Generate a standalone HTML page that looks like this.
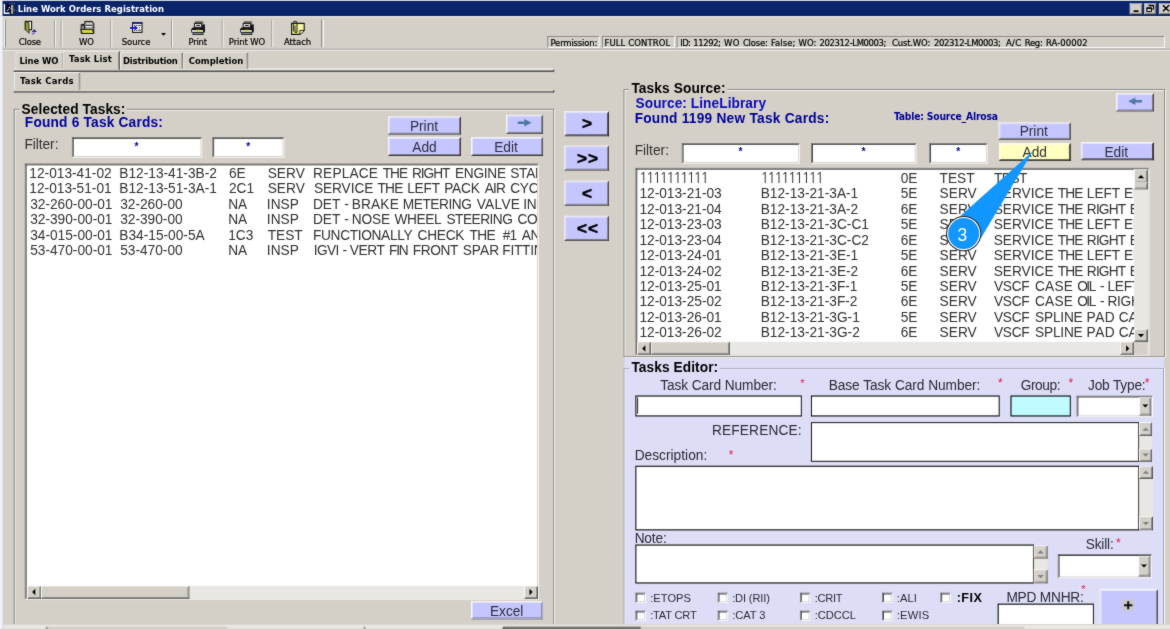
<!DOCTYPE html>
<html lang="en"><head><meta charset="utf-8"><title>Line Work Orders Registration</title>
<style>
html,body{margin:0;padding:0;overflow:hidden}
#page{position:absolute;left:0;top:0;width:1170px;height:629px;overflow:hidden;background:#D4D0C8}
body{width:1170px;height:629px;overflow:hidden;background:#D4D0C8;position:relative;font-family:"Liberation Sans",Arial,sans-serif}
#root{position:absolute;left:4px;top:4px;width:1366px;height:735px;transform:scale(0.856515);transform-origin:0 0}
#wrap{position:absolute;left:-4px;top:-4px;width:1178px;height:637px;overflow:hidden;background:#D4D0C8;filter:url(#soft)}
#root div,#root span{position:absolute;box-sizing:border-box}
#root span{white-space:pre;line-height:1}
#root .clip{overflow:hidden}
#root .th{font-family:"DejaVu Sans Condensed","Liberation Sans",sans-serif}
#root .ng{font-family:"NanumGothic","Liberation Sans",sans-serif}
#ov{position:absolute;left:4px;top:4px;width:1170px;height:629px;overflow:visible}
</style></head><body>
<svg width="0" height="0" style="position:absolute"><defs><filter id="soft" x="0" y="0" width="100%" height="100%" color-interpolation-filters="sRGB"><feConvolveMatrix order="3" kernelMatrix="1 2 1 2 26 2 1 2 1" edgeMode="duplicate" preserveAlpha="true"/></filter></defs></svg>
<div id="page">
<div id="wrap">
<div id="root">
<div style="left:-4.67px;top:-4.67px;width:1377.68px;height:6.07px;background:#EEF1F8;"></div>
<div style="left:-4.67px;top:-4.67px;width:7.24px;height:747.21px;background:#EEF1F8;"></div>
<div style="left:2.57px;top:1.4px;width:1370.44px;height:17.51px;background:#0A246A;"></div>
<span class="th" style="left:20.67px;top:5px;font-size:11px;font-weight:700;color:#fff;letter-spacing:0.05px;">Line Work Orders Registration</span>
<div style="left:2.57px;top:18.91px;width:1370.44px;height:1px;background:#fff"></div>
<div style="left:1319.3px;top:3.62px;width:14.83px;height:12.96px;border:1px solid;border-color:#fff #404040 #404040 #fff;"><div style="left:0;top:0;right:0;bottom:0;border:1px solid;border-color:#D4D0C8 #808080 #808080 #D4D0C8;background:#D4D0C8"></div></div>
<div style="left:1335.64px;top:3.62px;width:14.83px;height:12.96px;border:1px solid;border-color:#fff #404040 #404040 #fff;"><div style="left:0;top:0;right:0;bottom:0;border:1px solid;border-color:#D4D0C8 #808080 #808080 #D4D0C8;background:#D4D0C8"></div></div>
<div style="left:1353.16px;top:3.62px;width:14.83px;height:12.96px;border:1px solid;border-color:#fff #404040 #404040 #fff;"><div style="left:0;top:0;right:0;bottom:0;border:1px solid;border-color:#D4D0C8 #808080 #808080 #D4D0C8;background:#D4D0C8"></div></div>
<div style="left:4.67px;top:22.77px;width:1px;height:32.69px;background:#fff"></div>
<div style="left:5.72px;top:22.77px;width:1px;height:32.69px;background:#808080"></div>
<div style="left:62.58px;top:23.35px;width:1px;height:32.11px;background:#808080"></div>
<div style="left:63.63px;top:23.35px;width:1px;height:32.11px;background:#fff"></div>
<div style="left:70.75px;top:23.35px;width:1px;height:32.11px;background:#808080"></div>
<div style="left:71.8px;top:23.35px;width:1px;height:32.11px;background:#fff"></div>
<div style="left:129.13px;top:23.35px;width:1px;height:32.11px;background:#808080"></div>
<div style="left:130.18px;top:23.35px;width:1px;height:32.11px;background:#fff"></div>
<div style="left:200.35px;top:23.35px;width:1px;height:32.11px;background:#808080"></div>
<div style="left:201.4px;top:23.35px;width:1px;height:32.11px;background:#fff"></div>
<div style="left:258.72px;top:23.35px;width:1px;height:32.11px;background:#808080"></div>
<div style="left:259.77px;top:23.35px;width:1px;height:32.11px;background:#fff"></div>
<div style="left:317.1px;top:23.35px;width:1px;height:32.11px;background:#808080"></div>
<div style="left:318.15px;top:23.35px;width:1px;height:32.11px;background:#fff"></div>
<div style="left:375.47px;top:23.35px;width:1px;height:32.11px;background:#808080"></div>
<div style="left:376.53px;top:23.35px;width:1px;height:32.11px;background:#fff"></div>
<span class="th" style="left:21.95px;top:44px;font-size:11px;letter-spacing:-0.24px;-webkit-text-stroke:0.22px #000;">Close</span>
<span class="th" style="left:92.23px;top:44px;font-size:11px;letter-spacing:-0.04px;-webkit-text-stroke:0.22px #000;">WO</span>
<span class="th" style="left:142.2px;top:44px;font-size:11px;letter-spacing:-0.12px;-webkit-text-stroke:0.22px #000;">Source</span>
<span class="th" style="left:219.96px;top:44px;font-size:11px;letter-spacing:-0.23px;-webkit-text-stroke:0.22px #000;">Print</span>
<span class="th" style="left:267.13px;top:44px;font-size:11px;letter-spacing:-0.13px;-webkit-text-stroke:0.22px #000;">Print WO</span>
<span class="th" style="left:331.58px;top:44px;font-size:11px;letter-spacing:-0.06px;-webkit-text-stroke:0.22px #000;">Attach</span>
<div style="left:2.57px;top:56.98px;width:1370.44px;height:1px;background:#808080"></div>
<div style="left:2.57px;top:58.03px;width:1370.44px;height:1px;background:#fff"></div>
<div style="left:639.22px;top:41.8px;width:60.71px;height:14.13px;background:#D4D0C8;border:1px solid;border-color:#808080 #fff #fff #808080;"></div>
<div style="left:702.61px;top:41.8px;width:85.46px;height:14.13px;background:#D4D0C8;border:1px solid;border-color:#808080 #fff #fff #808080;"></div>
<div style="left:790.41px;top:41.8px;width:569.17px;height:14.13px;background:#D4D0C8;border:1px solid;border-color:#808080 #fff #fff #808080;"></div>
<span class="th" style="left:642.72px;top:45px;font-size:11px;letter-spacing:-0.2px;-webkit-text-stroke:0.22px #000;">Permission:</span>
<span class="th" style="left:705.77px;top:45px;font-size:11px;letter-spacing:0.11px;-webkit-text-stroke:0.22px #000;">FULL CONTROL</span>
<span class="th" style="left:794.26px;top:45px;font-size:11px;letter-spacing:-0.76px;-webkit-text-stroke:0.22px #000;">ID: </span>
<span class="th" style="left:809.26px;top:45px;font-size:11px;letter-spacing:-0.46px;-webkit-text-stroke:0.22px #000;">11292; </span>
<span class="th" style="left:845.4px;top:45px;font-size:11px;letter-spacing:0.19px;-webkit-text-stroke:0.22px #000;">WO </span>
<span class="th" style="left:867.35px;top:45px;font-size:11px;letter-spacing:-0.23px;-webkit-text-stroke:0.22px #000;">Close: </span>
<span class="th" style="left:900.16px;top:45px;font-size:11px;letter-spacing:0.06px;-webkit-text-stroke:0.22px #000;">False; </span>
<span class="th" style="left:932.15px;top:45px;font-size:11px;letter-spacing:0.2px;-webkit-text-stroke:0.22px #000;">WO: </span>
<span class="th" style="left:956.9px;top:45px;font-size:11px;letter-spacing:-0.45px;-webkit-text-stroke:0.22px #000;">202312-LM0003; </span>
<span class="th" style="left:1041.43px;top:45px;font-size:11px;letter-spacing:-0.2px;-webkit-text-stroke:0.22px #000;">Cust.WO: </span>
<span class="th" style="left:1090.58px;top:45px;font-size:11px;letter-spacing:-0.45px;-webkit-text-stroke:0.22px #000;">202312-LM0003; </span>
<span class="th" style="left:1174.41px;top:45px;font-size:11px;letter-spacing:0.44px;-webkit-text-stroke:0.22px #000;">A/C </span>
<span class="th" style="left:1196.36px;top:45px;font-size:11px;letter-spacing:-0.32px;-webkit-text-stroke:0.22px #000;">Reg: </span>
<span class="th" style="left:1221.11px;top:45px;font-size:11px;letter-spacing:0.09px;-webkit-text-stroke:0.22px #000;">RA-00002</span>
<div style="left:15.76px;top:80.44px;width:631.4px;height:1px;background:#fff"></div>
<div style="left:15.76px;top:81.61px;width:631.4px;height:1px;background:#808080"></div>
<div style="left:15.76px;top:82.54px;width:631.4px;height:1px;background:#404040"></div>
<div style="left:646.11px;top:80.56px;width:1px;height:2.92px;background:#404040"></div>
<div style="left:18.21px;top:61.18px;width:57.09px;height:19.38px;background:#D4D0C8;border:1px solid;border-color:#fff #404040 transparent #fff;border-radius:2px 2px 0 0;box-shadow:inset -1px 0 0 #808080;"></div>
<div style="left:139.75px;top:61.18px;width:74.02px;height:19.38px;background:#D4D0C8;border:1px solid;border-color:#fff #404040 transparent #fff;border-radius:2px 2px 0 0;box-shadow:inset -1px 0 0 #808080;"></div>
<div style="left:213.54px;top:61.18px;width:76.82px;height:19.38px;background:#D4D0C8;border:1px solid;border-color:#fff #404040 transparent #fff;border-radius:2px 2px 0 0;box-shadow:inset -1px 0 0 #808080;"></div>
<div style="left:72.62px;top:59.19px;width:67.37px;height:22.53px;background:#D4D0C8;border:1px solid;border-color:#fff #404040 transparent #fff;border-radius:2px 2px 0 0;box-shadow:inset -1px 0 0 #808080;"></div>
<span class="th" style="left:22.77px;top:66px;font-size:11px;font-weight:700;letter-spacing:-0.14px;">Line WO</span>
<span class="th" style="left:80.56px;top:63px;font-size:11px;font-weight:700;letter-spacing:0.21px;">Task List</span>
<span class="th" style="left:143.61px;top:66px;font-size:11px;font-weight:700;letter-spacing:-0.23px;">Distribution</span>
<span class="th" style="left:220.31px;top:66px;font-size:11px;font-weight:700;letter-spacing:0.04px;">Completion</span>
<div style="left:15.76px;top:104.96px;width:631.4px;height:1px;background:#fff"></div>
<div style="left:15.76px;top:106.01px;width:631.4px;height:1px;background:#808080"></div>
<div style="left:15.76px;top:106.94px;width:631.4px;height:1px;background:#404040"></div>
<div style="left:646.11px;top:105.08px;width:1px;height:2.8px;background:#404040"></div>
<div style="left:15.76px;top:84.41px;width:77.99px;height:21.83px;background:#D4D0C8;border:1px solid;border-color:#fff #404040 transparent #fff;border-radius:2px 2px 0 0;box-shadow:inset -1px 0 0 #808080;"></div>
<span class="th" style="left:23.35px;top:89px;font-size:11px;font-weight:700;letter-spacing:0.31px;">Task Cards</span>
<div style="left:15.53px;top:127.14px;width:631.51px;height:620.07px;border:1px solid #808080;box-shadow:inset 1px 1px 0 #fff, 1px 1px 0 #fff;"></div>
<div style="left:22.3px;top:120.14px;width:125.63px;height:14.01px;background:#D4D0C8;"></div>
<span style="left:25.22px;top:120px;font-size:16px;font-weight:700;letter-spacing:0.1px;">Selected Tasks:</span>
<span style="left:29.01px;top:135px;font-size:16px;font-weight:700;color:#00009A;letter-spacing:0.23px;">Found 6 Task Cards:</span>
<span style="left:28.54px;top:161px;font-size:16px;color:#303030;letter-spacing:-0.05px;">Filter:</span>
<div style="left:83.59px;top:160.42px;width:152.01px;height:24.05px;border:1px solid;border-color:#6e6e6e #fff #fff #6e6e6e;"><div style="left:0;top:0;right:0;bottom:0;border:1px solid;border-color:#2c2c2c #D4D0C8 #D4D0C8 #2c2c2c;background:#fff"></div></div>
<div style="left:247.98px;top:160.42px;width:83.94px;height:24.05px;border:1px solid;border-color:#6e6e6e #fff #fff #6e6e6e;"><div style="left:0;top:0;right:0;bottom:0;border:1px solid;border-color:#2c2c2c #D4D0C8 #D4D0C8 #2c2c2c;background:#fff"></div></div>
<span style="left:156.98px;top:165px;font-size:12px;font-weight:700;color:#00009A;">*</span>
<span style="left:287.63px;top:165px;font-size:12px;font-weight:700;color:#00009A;">*</span>
<div style="left:453.23px;top:135.55px;width:84.41px;height:21.6px;border:1px solid;border-color:#fff #1c1c1c #1c1c1c #fff;"><div style="left:0;top:0;right:0;bottom:0;border:1px solid;border-color:#E6E6FF #707078 #707078 #E6E6FF;background:#C6C6FF"></div></div>
<span style="left:478.56px;top:140px;font-size:16px;color:#2c2c40;">Print</span>
<div style="left:453.23px;top:160.18px;width:84.41px;height:21.72px;border:1px solid;border-color:#fff #1c1c1c #1c1c1c #fff;"><div style="left:0;top:0;right:0;bottom:0;border:1px solid;border-color:#E6E6FF #707078 #707078 #E6E6FF;background:#C6C6FF"></div></div>
<span style="left:481.3px;top:164px;font-size:16px;color:#2c2c40;">Add</span>
<div style="left:549.9px;top:160.18px;width:84.06px;height:21.72px;border:1px solid;border-color:#fff #1c1c1c #1c1c1c #fff;"><div style="left:0;top:0;right:0;bottom:0;border:1px solid;border-color:#E6E6FF #707078 #707078 #E6E6FF;background:#C6C6FF"></div></div>
<span style="left:577.02px;top:164px;font-size:16px;color:#2c2c40;">Edit</span>
<div style="left:590.88px;top:134.03px;width:43.08px;height:21.95px;border:1px solid;border-color:#fff #1c1c1c #1c1c1c #fff;"><div style="left:0;top:0;right:0;bottom:0;border:1px solid;border-color:#E6E6FF #707078 #707078 #E6E6FF;background:#C6C6FF"></div></div>
<div style="left:29.3px;top:190.89px;width:599.76px;height:509.16px;border:1px solid;border-color:#6e6e6e #fff #fff #6e6e6e;"><div style="left:0;top:0;right:0;bottom:0;border:1px solid;border-color:#2c2c2c #D4D0C8 #D4D0C8 #2c2c2c;background:#fff"></div></div>
<div class="clip" style="left:31px;top:193px;width:596.19px;height:490.7px;clip-path:inset(0.81px 0 0 0.99px)">
<span style="left:3.26px;top:2px;font-size:16px;color:#303030;">12-013-41-02</span>
<span style="left:108.34px;top:2px;font-size:16px;color:#303030;">B12-13-41-3B-2</span>
<span style="left:236.36px;top:2px;font-size:16px;color:#303030;">6E</span>
<span style="left:281.55px;top:2px;font-size:16px;color:#303030;">SERV</span>
<span style="left:334.48px;top:2px;font-size:16px;color:#303030;letter-spacing:0.19px;">REPLACE </span>
<span style="left:415.93px;top:2px;font-size:16px;color:#303030;letter-spacing:-1.25px;">THE </span>
<span style="left:450.07px;top:2px;font-size:16px;color:#303030;letter-spacing:-1.25px;">RIGHT </span>
<span style="left:500.16px;top:2px;font-size:16px;color:#303030;letter-spacing:-0.33px;">ENGINE </span>
<span style="left:564.67px;top:2px;font-size:16px;color:#303030;letter-spacing:-0.3px;">STARTER</span>
<span style="left:3.26px;top:19px;font-size:16px;color:#303030;">12-013-51-01</span>
<span style="left:108.34px;top:19px;font-size:16px;color:#303030;">B12-13-51-3A-1</span>
<span style="left:236.36px;top:19px;font-size:16px;color:#303030;">2C1</span>
<span style="left:281.55px;top:19px;font-size:16px;color:#303030;">SERV</span>
<span style="left:335.48px;top:19px;font-size:16px;color:#303030;letter-spacing:-0.09px;">SERVICE </span>
<span style="left:409.62px;top:19px;font-size:16px;color:#303030;letter-spacing:-0.78px;">THE </span>
<span style="left:444.35px;top:19px;font-size:16px;color:#303030;letter-spacing:-0.25px;">LEFT </span>
<span style="left:487.55px;top:19px;font-size:16px;color:#303030;letter-spacing:-0.24px;">PACK </span>
<span style="left:534.9px;top:19px;font-size:16px;color:#303030;letter-spacing:-0.92px;">AIR </span>
<span style="left:564.67px;top:19px;font-size:16px;color:#303030;letter-spacing:-0.3px;">CYCLE MACHINE</span>
<span style="left:4.26px;top:38px;font-size:16px;color:#303030;">32-260-00-01</span>
<span style="left:109.34px;top:38px;font-size:16px;color:#303030;">32-260-00</span>
<span style="left:235.36px;top:38px;font-size:16px;color:#303030;">NA</span>
<span style="left:280.55px;top:38px;font-size:16px;color:#303030;">INSP</span>
<span style="left:334.48px;top:38px;font-size:16px;color:#303030;letter-spacing:-0.09px;">DET </span>
<span style="left:370.98px;top:38px;font-size:16px;color:#303030;letter-spacing:-0.3px;">- </span>
<span style="left:379.55px;top:38px;font-size:16px;color:#303030;letter-spacing:0.2px;">BRAKE </span>
<span style="left:439.21px;top:38px;font-size:16px;color:#303030;letter-spacing:-0.52px;">METERING </span>
<span style="left:525.56px;top:38px;font-size:16px;color:#303030;letter-spacing:0.33px;">VALVE </span>
<span style="left:579.78px;top:38px;font-size:16px;color:#303030;letter-spacing:-0.3px;">INSTALLATION</span>
<span style="left:4.26px;top:56px;font-size:16px;color:#303030;">32-390-00-01</span>
<span style="left:109.34px;top:56px;font-size:16px;color:#303030;">32-390-00</span>
<span style="left:235.36px;top:56px;font-size:16px;color:#303030;">NA</span>
<span style="left:280.55px;top:56px;font-size:16px;color:#303030;">INSP</span>
<span style="left:334.48px;top:56px;font-size:16px;color:#303030;letter-spacing:-0.09px;">DET </span>
<span style="left:370.98px;top:56px;font-size:16px;color:#303030;letter-spacing:-0.3px;">- </span>
<span style="left:379.55px;top:56px;font-size:16px;color:#303030;letter-spacing:-0.16px;">NOSE </span>
<span style="left:429.47px;top:56px;font-size:16px;color:#303030;letter-spacing:-0.47px;">WHEEL </span>
<span style="left:490.3px;top:56px;font-size:16px;color:#303030;letter-spacing:-0.61px;">STEERING </span>
<span style="left:573.08px;top:56px;font-size:16px;color:#303030;letter-spacing:-0.3px;">CONTROL</span>
<span style="left:4.26px;top:74px;font-size:16px;color:#303030;">34-015-00-01</span>
<span style="left:108.34px;top:74px;font-size:16px;color:#303030;">B34-15-00-5A</span>
<span style="left:235.36px;top:74px;font-size:16px;color:#303030;">1C3</span>
<span style="left:281.55px;top:74px;font-size:16px;color:#303030;">TEST</span>
<span style="left:334.48px;top:74px;font-size:16px;color:#303030;letter-spacing:-0.4px;">FUNCTIONALLY </span>
<span style="left:456.44px;top:74px;font-size:16px;color:#303030;letter-spacing:-0.31px;">CHECK </span>
<span style="left:517.27px;top:74px;font-size:16px;color:#303030;letter-spacing:-0.78px;">THE  </span>
<span style="left:556.03px;top:74px;font-size:16px;color:#303030;letter-spacing:-1.2px;">#1 </span>
<span style="left:578.1px;top:74px;font-size:16px;color:#303030;letter-spacing:-0.3px;">AND #2</span>
<span style="left:4.26px;top:92px;font-size:16px;color:#303030;">53-470-00-01</span>
<span style="left:109.34px;top:92px;font-size:16px;color:#303030;">53-470-00</span>
<span style="left:235.36px;top:92px;font-size:16px;color:#303030;">NA</span>
<span style="left:280.55px;top:92px;font-size:16px;color:#303030;">INSP</span>
<span style="left:335.3px;top:92px;font-size:16px;color:#303030;letter-spacing:-0.71px;">IGVI </span>
<span style="left:368.88px;top:92px;font-size:16px;color:#303030;letter-spacing:-0.3px;">- </span>
<span style="left:377.28px;top:92px;font-size:16px;color:#303030;letter-spacing:-0.39px;">VERT </span>
<span style="left:423.1px;top:92px;font-size:16px;color:#303030;letter-spacing:-1.31px;">FIN </span>
<span style="left:451px;top:92px;font-size:16px;color:#303030;letter-spacing:-0.51px;">FRONT </span>
<span style="left:509.21px;top:92px;font-size:16px;color:#303030;letter-spacing:0.03px;">SPAR </span>
<span style="left:555.5px;top:92px;font-size:16px;color:#303030;letter-spacing:-0.3px;">FITTING</span>
</div>
<div style="left:31.76px;top:683.82px;width:595.9px;height:14.83px;background:#E9E7E3;"></div>
<div style="left:31.76px;top:683.82px;width:15.88px;height:14.83px;border:1px solid;border-color:#fff #404040 #404040 #fff;"><div style="left:0;top:0;right:0;bottom:0;border:1px solid;border-color:#D4D0C8 #808080 #808080 #D4D0C8;background:#D4D0C8"></div></div>
<div style="left:611.78px;top:683.82px;width:15.88px;height:14.83px;border:1px solid;border-color:#fff #404040 #404040 #fff;"><div style="left:0;top:0;right:0;bottom:0;border:1px solid;border-color:#D4D0C8 #808080 #808080 #D4D0C8;background:#D4D0C8"></div></div>
<div style="left:47.63px;top:683.82px;width:173.84px;height:14.83px;border:1px solid;border-color:#fff #404040 #404040 #fff;"><div style="left:0;top:0;right:0;bottom:0;border:1px solid;border-color:#D4D0C8 #808080 #808080 #D4D0C8;background:#D4D0C8"></div></div>
<div style="left:550.49px;top:702.38px;width:83.24px;height:20.43px;border:1px solid;border-color:#fff #1c1c1c #1c1c1c #fff;"><div style="left:0;top:0;right:0;bottom:0;border:1px solid;border-color:#E6E6FF #707078 #707078 #E6E6FF;background:#C6C6FF"></div></div>
<span style="left:571.97px;top:706px;font-size:16px;color:#2c2c40;">Excel</span>
<div style="left:659.18px;top:129.71px;width:51.84px;height:28.84px;border:1px solid;border-color:#fff #000 #000 #fff;"><div style="left:0;top:0;right:0;bottom:0;border:1px solid;border-color:#E6E6FF #303030 #303030 #E6E6FF;background:#C6C6FF"></div></div>
<span style="left:679.37px;top:134px;font-size:20px;font-weight:700;-webkit-text-stroke:0.55px #000;">&gt;</span>
<div style="left:659.18px;top:170.11px;width:51.84px;height:28.72px;border:1px solid;border-color:#fff #1c1c1c #1c1c1c #fff;"><div style="left:0;top:0;right:0;bottom:0;border:1px solid;border-color:#E6E6FF #707078 #707078 #E6E6FF;background:#C6C6FF"></div></div>
<span style="left:673.53px;top:174px;font-size:20px;font-weight:700;letter-spacing:1.2px;-webkit-text-stroke:0.55px #000;">&gt;&gt;</span>
<div style="left:659.18px;top:210.97px;width:51.84px;height:29.3px;border:1px solid;border-color:#fff #1c1c1c #1c1c1c #fff;"><div style="left:0;top:0;right:0;bottom:0;border:1px solid;border-color:#E6E6FF #707078 #707078 #E6E6FF;background:#C6C6FF"></div></div>
<span style="left:679.37px;top:215px;font-size:20px;font-weight:700;-webkit-text-stroke:0.55px #000;">&lt;</span>
<div style="left:659.18px;top:252.42px;width:51.84px;height:28.72px;border:1px solid;border-color:#fff #1c1c1c #1c1c1c #fff;"><div style="left:0;top:0;right:0;bottom:0;border:1px solid;border-color:#E6E6FF #707078 #707078 #E6E6FF;background:#C6C6FF"></div></div>
<span style="left:673.53px;top:256px;font-size:20px;font-weight:700;letter-spacing:1.2px;-webkit-text-stroke:0.55px #000;">&lt;&lt;</span>
<div style="left:727.95px;top:103.68px;width:632.21px;height:313.6px;border:1px solid #808080;box-shadow:inset 1px 1px 0 #fff, 1px 1px 0 #fff;"></div>
<div style="left:734.25px;top:96.67px;width:114.42px;height:14.01px;background:#D4D0C8;"></div>
<span style="left:737.17px;top:96px;font-size:16px;font-weight:700;letter-spacing:0.14px;">Tasks Source:</span>
<span style="left:741.96px;top:113px;font-size:16px;font-weight:700;color:#0A0ABE;letter-spacing:0.07px;">Source: LineLibrary</span>
<span style="left:740.96px;top:131px;font-size:16px;font-weight:700;color:#00009A;letter-spacing:0.28px;">Found 1199 New Task Cards:</span>
<span class="th" style="left:1043.65px;top:130px;font-size:12px;font-weight:700;color:#00009A;letter-spacing:-0.22px;">Table: Source_Alrosa</span>
<span style="left:740.96px;top:168px;font-size:16px;color:#303030;letter-spacing:0.01px;">Filter:</span>
<div style="left:796.25px;top:166.61px;width:137.3px;height:24.4px;border:1px solid;border-color:#6e6e6e #fff #fff #6e6e6e;"><div style="left:0;top:0;right:0;bottom:0;border:1px solid;border-color:#2c2c2c #D4D0C8 #D4D0C8 #2c2c2c;background:#fff"></div></div>
<div style="left:947.21px;top:166.61px;width:123.17px;height:24.4px;border:1px solid;border-color:#6e6e6e #fff #fff #6e6e6e;"><div style="left:0;top:0;right:0;bottom:0;border:1px solid;border-color:#2c2c2c #D4D0C8 #D4D0C8 #2c2c2c;background:#fff"></div></div>
<div style="left:1084.63px;top:166.61px;width:68.65px;height:24.4px;border:1px solid;border-color:#6e6e6e #fff #fff #6e6e6e;"><div style="left:0;top:0;right:0;bottom:0;border:1px solid;border-color:#2c2c2c #D4D0C8 #D4D0C8 #2c2c2c;background:#fff"></div></div>
<span style="left:862.17px;top:171px;font-size:12px;font-weight:700;color:#00009A;">*</span>
<span style="left:1005.89px;top:171px;font-size:12px;font-weight:700;color:#00009A;">*</span>
<span style="left:1116.34px;top:171px;font-size:12px;font-weight:700;color:#00009A;">*</span>
<div style="left:1166.12px;top:143.25px;width:83.83px;height:20.2px;border:1px solid;border-color:#fff #1c1c1c #1c1c1c #fff;"><div style="left:0;top:0;right:0;bottom:0;border:1px solid;border-color:#E6E6FF #707078 #707078 #E6E6FF;background:#C6C6FF"></div></div>
<span style="left:1190.46px;top:146px;font-size:16px;color:#2c2c40;">Print</span>
<div style="left:1166.12px;top:167.19px;width:83.83px;height:20.55px;border:1px solid;border-color:#fff #000 #000 #fff;"><div style="left:0;top:0;right:0;bottom:0;border:1px solid;border-color:#FFFFE8 #303030 #303030 #FFFFE8;background:#FFFFC0"></div></div>
<span style="left:1193.9px;top:170px;font-size:16px;color:#303030;">Add</span>
<div style="left:1262.21px;top:166.14px;width:84.3px;height:21.25px;border:1px solid;border-color:#fff #000 #000 #fff;"><div style="left:0;top:0;right:0;bottom:0;border:1px solid;border-color:#E6E6FF #303030 #303030 #E6E6FF;background:#C6C6FF"></div></div>
<span style="left:1289.44px;top:170px;font-size:16px;color:#2c2c40;">Edit</span>
<div style="left:1303.3px;top:108.58px;width:43.9px;height:21.83px;border:1px solid;border-color:#fff #1c1c1c #1c1c1c #fff;"><div style="left:0;top:0;right:0;bottom:0;border:1px solid;border-color:#E6E6FF #707078 #707078 #E6E6FF;background:#C6C6FF"></div></div>
<div style="left:742.31px;top:196.49px;width:599.64px;height:218.68px;border:1px solid;border-color:#6e6e6e #fff #fff #6e6e6e;"><div style="left:0;top:0;right:0;bottom:0;border:1px solid;border-color:#2c2c2c #D4D0C8 #D4D0C8 #2c2c2c;background:#fff"></div></div>
<div class="clip" style="left:744px;top:198px;width:579.97px;height:201.29px;clip-path:inset(0.48px 0 0 0.29px)">
<span class="ng" style="left:2.15px;top:2px;font-size:16.5px;color:#303030;letter-spacing:-2.04px;">1111111111</span>
<span class="ng" style="left:143.88px;top:2px;font-size:16.5px;color:#303030;letter-spacing:-1.98px;">111111111</span>
<span style="left:307.59px;top:3px;font-size:16px;color:#303030;">0E</span>
<span style="left:353px;top:3px;font-size:16px;color:#303030;">TEST</span>
<span style="left:416.52px;top:3px;font-size:16px;color:#303030;letter-spacing:-0.63px;">TEST</span>
<span style="left:2.56px;top:20px;font-size:16px;color:#303030;">12-013-21-03</span>
<span style="left:144.18px;top:20px;font-size:16px;color:#303030;">B12-13-21-3A-1</span>
<span style="left:307.59px;top:20px;font-size:16px;color:#303030;">5E</span>
<span style="left:353px;top:20px;font-size:16px;color:#303030;">SERV</span>
<span style="left:416.17px;top:20px;font-size:16px;color:#303030;letter-spacing:-0.01px;">SERVICE </span>
<span style="left:491px;top:20px;font-size:16px;color:#303030;letter-spacing:-1.01px;">THE </span>
<span style="left:524.91px;top:20px;font-size:16px;color:#303030;letter-spacing:-0.09px;">LEFT </span>
<span style="left:568.23px;top:20px;font-size:16px;color:#303030;letter-spacing:-0.3px;">ENGINE</span>
<span style="left:2.56px;top:39px;font-size:16px;color:#303030;">12-013-21-04</span>
<span style="left:144.18px;top:39px;font-size:16px;color:#303030;">B12-13-21-3A-2</span>
<span style="left:307.59px;top:39px;font-size:16px;color:#303030;">6E</span>
<span style="left:353px;top:39px;font-size:16px;color:#303030;">SERV</span>
<span style="left:416.17px;top:39px;font-size:16px;color:#303030;letter-spacing:-0.01px;">SERVICE </span>
<span style="left:491px;top:39px;font-size:16px;color:#303030;letter-spacing:-1.01px;">THE </span>
<span style="left:524.91px;top:39px;font-size:16px;color:#303030;letter-spacing:-0.98px;">RIGHT </span>
<span style="left:575.12px;top:39px;font-size:16px;color:#303030;letter-spacing:-0.3px;">ENGINE</span>
<span style="left:2.56px;top:56px;font-size:16px;color:#303030;">12-013-23-03</span>
<span style="left:144.18px;top:56px;font-size:16px;color:#303030;">B12-13-21-3C-C1</span>
<span style="left:307.59px;top:56px;font-size:16px;color:#303030;">5E</span>
<span style="left:353px;top:56px;font-size:16px;color:#303030;">SERV</span>
<span style="left:416.17px;top:56px;font-size:16px;color:#303030;letter-spacing:-0.01px;">SERVICE </span>
<span style="left:491px;top:56px;font-size:16px;color:#303030;letter-spacing:-1.01px;">THE </span>
<span style="left:524.91px;top:56px;font-size:16px;color:#303030;letter-spacing:-0.09px;">LEFT </span>
<span style="left:568.23px;top:56px;font-size:16px;color:#303030;letter-spacing:-0.3px;">ENGINE</span>
<span style="left:2.56px;top:75px;font-size:16px;color:#303030;">12-013-23-04</span>
<span style="left:144.18px;top:75px;font-size:16px;color:#303030;">B12-13-21-3C-C2</span>
<span style="left:307.59px;top:75px;font-size:16px;color:#303030;">6E</span>
<span style="left:353px;top:75px;font-size:16px;color:#303030;">SERV</span>
<span style="left:416.17px;top:75px;font-size:16px;color:#303030;letter-spacing:-0.01px;">SERVICE </span>
<span style="left:491px;top:75px;font-size:16px;color:#303030;letter-spacing:-1.01px;">THE </span>
<span style="left:524.91px;top:75px;font-size:16px;color:#303030;letter-spacing:-0.98px;">RIGHT </span>
<span style="left:575.12px;top:75px;font-size:16px;color:#303030;letter-spacing:-0.3px;">ENGINE</span>
<span style="left:2.56px;top:93px;font-size:16px;color:#303030;">12-013-24-01</span>
<span style="left:144.18px;top:93px;font-size:16px;color:#303030;">B12-13-21-3E-1</span>
<span style="left:307.59px;top:93px;font-size:16px;color:#303030;">5E</span>
<span style="left:353px;top:93px;font-size:16px;color:#303030;">SERV</span>
<span style="left:416.17px;top:93px;font-size:16px;color:#303030;letter-spacing:-0.01px;">SERVICE </span>
<span style="left:491px;top:93px;font-size:16px;color:#303030;letter-spacing:-1.01px;">THE </span>
<span style="left:524.91px;top:93px;font-size:16px;color:#303030;letter-spacing:-0.09px;">LEFT </span>
<span style="left:568.23px;top:93px;font-size:16px;color:#303030;letter-spacing:-0.3px;">ENGINE</span>
<span style="left:2.56px;top:111px;font-size:16px;color:#303030;">12-013-24-02</span>
<span style="left:144.18px;top:111px;font-size:16px;color:#303030;">B12-13-21-3E-2</span>
<span style="left:307.59px;top:111px;font-size:16px;color:#303030;">6E</span>
<span style="left:353px;top:111px;font-size:16px;color:#303030;">SERV</span>
<span style="left:416.17px;top:111px;font-size:16px;color:#303030;letter-spacing:-0.01px;">SERVICE </span>
<span style="left:491px;top:111px;font-size:16px;color:#303030;letter-spacing:-1.01px;">THE </span>
<span style="left:524.91px;top:111px;font-size:16px;color:#303030;letter-spacing:-0.98px;">RIGHT </span>
<span style="left:575.12px;top:111px;font-size:16px;color:#303030;letter-spacing:-0.3px;">ENGINE</span>
<span style="left:2.56px;top:129px;font-size:16px;color:#303030;">12-013-25-01</span>
<span style="left:144.18px;top:129px;font-size:16px;color:#303030;">B12-13-21-3F-1</span>
<span style="left:307.59px;top:129px;font-size:16px;color:#303030;">5E</span>
<span style="left:353px;top:129px;font-size:16px;color:#303030;">SERV</span>
<span style="left:416.52px;top:129px;font-size:16px;color:#303030;letter-spacing:-0.37px;">VSCF </span>
<span style="left:464.38px;top:129px;font-size:16px;color:#303030;letter-spacing:0.26px;">CASE </span>
<span style="left:513.65px;top:129px;font-size:16px;color:#303030;letter-spacing:-1.74px;">OIL </span>
<span style="left:540.39px;top:129px;font-size:16px;color:#303030;letter-spacing:-0.3px;">- </span>
<span style="left:548.96px;top:129px;font-size:16px;color:#303030;letter-spacing:-0.3px;">LEFT</span>
<span style="left:2.56px;top:146px;font-size:16px;color:#303030;">12-013-25-02</span>
<span style="left:144.18px;top:146px;font-size:16px;color:#303030;">B12-13-21-3F-2</span>
<span style="left:307.59px;top:146px;font-size:16px;color:#303030;">6E</span>
<span style="left:353px;top:146px;font-size:16px;color:#303030;">SERV</span>
<span style="left:416.52px;top:146px;font-size:16px;color:#303030;letter-spacing:-0.37px;">VSCF </span>
<span style="left:464.38px;top:146px;font-size:16px;color:#303030;letter-spacing:0.26px;">CASE </span>
<span style="left:513.65px;top:146px;font-size:16px;color:#303030;letter-spacing:-1.74px;">OIL </span>
<span style="left:540.39px;top:146px;font-size:16px;color:#303030;letter-spacing:-0.3px;">- </span>
<span style="left:548.96px;top:146px;font-size:16px;color:#303030;letter-spacing:-0.3px;">RIGHT</span>
<span style="left:2.56px;top:165px;font-size:16px;color:#303030;">12-013-26-01</span>
<span style="left:144.18px;top:165px;font-size:16px;color:#303030;">B12-13-21-3G-1</span>
<span style="left:307.59px;top:165px;font-size:16px;color:#303030;">5E</span>
<span style="left:353px;top:165px;font-size:16px;color:#303030;">SERV</span>
<span style="left:416.52px;top:165px;font-size:16px;color:#303030;letter-spacing:-0.37px;">VSCF </span>
<span style="left:464.38px;top:165px;font-size:16px;color:#303030;letter-spacing:-0.23px;">SPLINE </span>
<span style="left:524.56px;top:165px;font-size:16px;color:#303030;letter-spacing:0.63px;">PAD </span>
<span style="left:562.22px;top:165px;font-size:16px;color:#303030;letter-spacing:-0.3px;">CASE</span>
<span style="left:2.56px;top:182px;font-size:16px;color:#303030;">12-013-26-02</span>
<span style="left:144.18px;top:182px;font-size:16px;color:#303030;">B12-13-21-3G-2</span>
<span style="left:307.59px;top:182px;font-size:16px;color:#303030;">6E</span>
<span style="left:353px;top:182px;font-size:16px;color:#303030;">SERV</span>
<span style="left:416.52px;top:182px;font-size:16px;color:#303030;letter-spacing:-0.37px;">VSCF </span>
<span style="left:464.38px;top:182px;font-size:16px;color:#303030;letter-spacing:-0.23px;">SPLINE </span>
<span style="left:524.56px;top:182px;font-size:16px;color:#303030;letter-spacing:0.63px;">PAD </span>
<span style="left:562.22px;top:182px;font-size:16px;color:#303030;letter-spacing:-0.3px;">CASE</span>
</div>
<div style="left:1324.2px;top:198.48px;width:15.88px;height:200.81px;background:#E9E7E3;"></div>
<div style="left:1324.2px;top:198.48px;width:15.88px;height:15.41px;border:1px solid;border-color:#fff #404040 #404040 #fff;"><div style="left:0;top:0;right:0;bottom:0;border:1px solid;border-color:#D4D0C8 #808080 #808080 #D4D0C8;background:#D4D0C8"></div></div>
<div style="left:1324.2px;top:383.88px;width:15.88px;height:15.41px;border:1px solid;border-color:#fff #404040 #404040 #fff;"><div style="left:0;top:0;right:0;bottom:0;border:1px solid;border-color:#D4D0C8 #808080 #808080 #D4D0C8;background:#D4D0C8"></div></div>
<div style="left:1324.2px;top:212.96px;width:15.88px;height:8.17px;border:1px solid;border-color:#fff #404040 #404040 #fff;"><div style="left:0;top:0;right:0;bottom:0;border:1px solid;border-color:#D4D0C8 #808080 #808080 #D4D0C8;background:#D4D0C8"></div></div>
<div style="left:744.06px;top:399.41px;width:580.14px;height:15.06px;background:#E9E7E3;"></div>
<div style="left:744.06px;top:399.41px;width:15.88px;height:15.06px;border:1px solid;border-color:#fff #404040 #404040 #fff;"><div style="left:0;top:0;right:0;bottom:0;border:1px solid;border-color:#D4D0C8 #808080 #808080 #D4D0C8;background:#D4D0C8"></div></div>
<div style="left:1308.32px;top:399.41px;width:15.88px;height:15.06px;border:1px solid;border-color:#fff #404040 #404040 #fff;"><div style="left:0;top:0;right:0;bottom:0;border:1px solid;border-color:#D4D0C8 #808080 #808080 #D4D0C8;background:#D4D0C8"></div></div>
<div style="left:759.94px;top:399.41px;width:91.88px;height:15.06px;border:1px solid;border-color:#fff #404040 #404040 #fff;"><div style="left:0;top:0;right:0;bottom:0;border:1px solid;border-color:#D4D0C8 #808080 #808080 #D4D0C8;background:#D4D0C8"></div></div>
<div style="left:1324.2px;top:399.41px;width:16.11px;height:15.06px;background:#D4D0C8;"></div>
<div style="left:728.88px;top:418.21px;width:630.34px;height:311.73px;background:#DDDDF7;"></div>
<div style="left:727.95px;top:429.65px;width:630.58px;height:317.57px;border:1px solid #9a9ab0;box-shadow:inset 1px 1px 0 #fff, 1px 0 0 #fff;"></div>
<div style="left:734.37px;top:422.64px;width:105.66px;height:14.01px;background:#DDDDF7;"></div>
<span style="left:737.17px;top:421px;font-size:16px;font-weight:700;letter-spacing:0.09px;">Tasks Editor:</span>
<span style="left:770.8px;top:442px;font-size:16px;color:#2a2a34;letter-spacing:-0.11px;">Task Card Number:</span>
<span style="left:967.46px;top:442px;font-size:16px;color:#2a2a34;letter-spacing:-0.06px;">Base Task Card Number:</span>
<span style="left:1191.69px;top:442px;font-size:16px;color:#2a2a34;letter-spacing:-0.5px;">Group:</span>
<span style="left:1270.26px;top:442px;font-size:16px;color:#2a2a34;letter-spacing:-0.22px;">Job Type:</span>
<span style="left:934.32px;top:441px;font-size:13px;color:#E0204A;">*</span>
<span style="left:1165.11px;top:440px;font-size:14px;color:#E0204A;">*</span>
<span style="left:1247.42px;top:440px;font-size:14px;color:#E0204A;">*</span>
<span style="left:1336.38px;top:440px;font-size:14px;color:#E0204A;">*</span>
<div style="left:741.61px;top:461.52px;width:194.28px;height:24.05px;background:#fff;border:1px solid #000;box-shadow:0 0 0 0.2px #000;"></div>
<div style="left:743.94px;top:464.44px;width:1px;height:18.45px;background:#000"></div>
<div style="left:946.86px;top:461.52px;width:220.31px;height:24.05px;background:#fff;border:1px solid #000;box-shadow:0 0 0 0.2px #000;"></div>
<div style="left:1179.66px;top:461.52px;width:70.64px;height:24.05px;background:#C0FBFF;border:1px solid #000;box-shadow:0 0 0 0.2px #000;"></div>
<div style="left:1257.42px;top:462.34px;width:88.5px;height:24.28px;border:1px solid;border-color:#6e6e6e #fff #fff #6e6e6e;"><div style="left:0;top:0;right:0;bottom:0;border:1px solid;border-color:#2c2c2c #D4D0C8 #D4D0C8 #2c2c2c;background:#fff"></div></div>
<div style="left:1330.04px;top:464.44px;width:14.01px;height:20.08px;border:1px solid;border-color:#fff #404040 #404040 #fff;"><div style="left:0;top:0;right:0;bottom:0;border:1px solid;border-color:#D4D0C8 #808080 #808080 #D4D0C8;background:#D4D0C8"></div></div>
<span style="left:831.21px;top:495px;font-size:16px;color:#2a2a34;letter-spacing:0.18px;">REFERENCE:</span>
<div style="left:946.86px;top:493.04px;width:383.41px;height:46.23px;background:#fff;border:1px solid #000;box-shadow:0 0 0 0.2px #000;"></div>
<div style="left:1330.04px;top:493.39px;width:15.18px;height:45.53px;background:#E9E7E3;"></div>
<div style="left:1330.04px;top:493.39px;width:15.18px;height:15.41px;border:1px solid;border-color:#fff #404040 #404040 #fff;"><div style="left:0;top:0;right:0;bottom:0;border:1px solid;border-color:#D4D0C8 #808080 #808080 #D4D0C8;background:#D4D0C8"></div></div>
<div style="left:1330.04px;top:523.52px;width:15.18px;height:15.41px;border:1px solid;border-color:#fff #404040 #404040 #fff;"><div style="left:0;top:0;right:0;bottom:0;border:1px solid;border-color:#D4D0C8 #808080 #808080 #D4D0C8;background:#D4D0C8"></div></div>
<span style="left:740.96px;top:524px;font-size:16px;color:#2a2a34;letter-spacing:0.03px;">Description:</span>
<span style="left:850.81px;top:524px;font-size:14px;color:#E0204A;">*</span>
<div style="left:741.61px;top:543.83px;width:588.66px;height:75.66px;background:#fff;border:1px solid #000;box-shadow:0 0 0 0.2px #000;"></div>
<div style="left:1330.04px;top:543.6px;width:15.64px;height:75.19px;background:#E9E7E3;"></div>
<div style="left:1330.04px;top:543.6px;width:15.64px;height:15.41px;border:1px solid;border-color:#fff #404040 #404040 #fff;"><div style="left:0;top:0;right:0;bottom:0;border:1px solid;border-color:#D4D0C8 #808080 #808080 #D4D0C8;background:#D4D0C8"></div></div>
<div style="left:1330.04px;top:603.38px;width:15.64px;height:15.41px;border:1px solid;border-color:#fff #404040 #404040 #fff;"><div style="left:0;top:0;right:0;bottom:0;border:1px solid;border-color:#D4D0C8 #808080 #808080 #D4D0C8;background:#D4D0C8"></div></div>
<span style="left:740.96px;top:621px;font-size:16px;color:#2a2a34;letter-spacing:-0.19px;">Note:</span>
<div style="left:741.61px;top:636.3px;width:465.61px;height:44.6px;background:#fff;border:1px solid #000;box-shadow:0 0 0 0.2px #000;"></div>
<div style="left:1206.98px;top:636.53px;width:15.88px;height:44.13px;background:#E9E7E3;"></div>
<div style="left:1206.98px;top:636.53px;width:15.88px;height:15.41px;border:1px solid;border-color:#fff #404040 #404040 #fff;"><div style="left:0;top:0;right:0;bottom:0;border:1px solid;border-color:#D4D0C8 #808080 #808080 #D4D0C8;background:#D4D0C8"></div></div>
<div style="left:1206.98px;top:665.25px;width:15.88px;height:15.41px;border:1px solid;border-color:#fff #404040 #404040 #fff;"><div style="left:0;top:0;right:0;bottom:0;border:1px solid;border-color:#D4D0C8 #808080 #808080 #D4D0C8;background:#D4D0C8"></div></div>
<span style="left:1267.58px;top:628px;font-size:16px;color:#2a2a34;letter-spacing:-0.21px;">Skill:</span>
<span style="left:1302.87px;top:627px;font-size:14px;color:#E0204A;">*</span>
<div style="left:1235.47px;top:646.81px;width:109.05px;height:28.25px;border:1px solid;border-color:#6e6e6e #fff #fff #6e6e6e;"><div style="left:0;top:0;right:0;bottom:0;border:1px solid;border-color:#2c2c2c #D4D0C8 #D4D0C8 #2c2c2c;background:#fff"></div></div>
<div style="left:1328.64px;top:648.91px;width:14.01px;height:24.05px;border:1px solid;border-color:#fff #404040 #404040 #fff;"><div style="left:0;top:0;right:0;bottom:0;border:1px solid;border-color:#D4D0C8 #808080 #808080 #D4D0C8;background:#D4D0C8"></div></div>
<div style="left:741.96px;top:691.64px;width:12.14px;height:12.14px;border:1px solid;border-color:#6e6e6e #fff #fff #6e6e6e;"><div style="left:0;top:0;right:0;bottom:0;border:1px solid;border-color:#2c2c2c #D4D0C8 #D4D0C8 #2c2c2c;background:#fff"></div></div>
<span style="left:759.17px;top:692px;font-size:13px;color:#2a2a34;letter-spacing:0.03px;">:ETOPS</span>
<div style="left:741.96px;top:712.54px;width:12.14px;height:12.14px;border:1px solid;border-color:#6e6e6e #fff #fff #6e6e6e;"><div style="left:0;top:0;right:0;bottom:0;border:1px solid;border-color:#2c2c2c #D4D0C8 #D4D0C8 #2c2c2c;background:#fff"></div></div>
<span style="left:759.17px;top:712px;font-size:13px;color:#2a2a34;letter-spacing:-0.26px;">:TAT CRT</span>
<div style="left:837.58px;top:691.64px;width:12.14px;height:12.14px;border:1px solid;border-color:#6e6e6e #fff #fff #6e6e6e;"><div style="left:0;top:0;right:0;bottom:0;border:1px solid;border-color:#2c2c2c #D4D0C8 #D4D0C8 #2c2c2c;background:#fff"></div></div>
<span style="left:854.79px;top:692px;font-size:13px;color:#2a2a34;letter-spacing:-0.18px;">:DI (RII)</span>
<div style="left:837.58px;top:712.54px;width:12.14px;height:12.14px;border:1px solid;border-color:#6e6e6e #fff #fff #6e6e6e;"><div style="left:0;top:0;right:0;bottom:0;border:1px solid;border-color:#2c2c2c #D4D0C8 #D4D0C8 #2c2c2c;background:#fff"></div></div>
<span style="left:854.79px;top:712px;font-size:13px;color:#2a2a34;letter-spacing:-0.06px;">:CAT 3</span>
<div style="left:934.02px;top:691.64px;width:12.14px;height:12.14px;border:1px solid;border-color:#6e6e6e #fff #fff #6e6e6e;"><div style="left:0;top:0;right:0;bottom:0;border:1px solid;border-color:#2c2c2c #D4D0C8 #D4D0C8 #2c2c2c;background:#fff"></div></div>
<span style="left:951.23px;top:692px;font-size:13px;color:#2a2a34;letter-spacing:-0.4px;">:CRIT</span>
<div style="left:934.02px;top:712.54px;width:12.14px;height:12.14px;border:1px solid;border-color:#6e6e6e #fff #fff #6e6e6e;"><div style="left:0;top:0;right:0;bottom:0;border:1px solid;border-color:#2c2c2c #D4D0C8 #D4D0C8 #2c2c2c;background:#fff"></div></div>
<span style="left:951.23px;top:712px;font-size:13px;color:#2a2a34;letter-spacing:-0.07px;">:CDCCL</span>
<div style="left:1029.75px;top:691.64px;width:12.14px;height:12.14px;border:1px solid;border-color:#6e6e6e #fff #fff #6e6e6e;"><div style="left:0;top:0;right:0;bottom:0;border:1px solid;border-color:#2c2c2c #D4D0C8 #D4D0C8 #2c2c2c;background:#fff"></div></div>
<span style="left:1046.97px;top:692px;font-size:13px;color:#2a2a34;letter-spacing:0.11px;">:ALI</span>
<div style="left:1029.75px;top:712.54px;width:12.14px;height:12.14px;border:1px solid;border-color:#6e6e6e #fff #fff #6e6e6e;"><div style="left:0;top:0;right:0;bottom:0;border:1px solid;border-color:#2c2c2c #D4D0C8 #D4D0C8 #2c2c2c;background:#fff"></div></div>
<span style="left:1046.97px;top:712px;font-size:13px;color:#2a2a34;letter-spacing:0.27px;">:EWIS</span>
<div style="left:1097.82px;top:691.64px;width:12.14px;height:12.14px;border:1px solid;border-color:#6e6e6e #fff #fff #6e6e6e;"><div style="left:0;top:0;right:0;bottom:0;border:1px solid;border-color:#2c2c2c #D4D0C8 #D4D0C8 #2c2c2c;background:#fff"></div></div>
<span style="left:1116.9px;top:691px;font-size:14.7px;font-weight:700;letter-spacing:0.59px;">:FIX</span>
<span style="left:1175.04px;top:690px;font-size:16px;color:#2a2a34;letter-spacing:-0.26px;">MPD MNHR:</span>
<span style="left:1262.51px;top:681px;font-size:13px;color:#E0204A;">*</span>
<div style="left:1165.42px;top:704.95px;width:111.85px;height:32.92px;background:#fff;border:1px solid #000;box-shadow:0 0 0 0.2px #000;"></div>
<div style="left:1283.57px;top:688.25px;width:68.65px;height:51.95px;border:1px solid;border-color:#fff #1c1c1c #1c1c1c #fff;"><div style="left:0;top:0;right:0;bottom:0;border:1px solid;border-color:#E6E6FF #707078 #707078 #E6E6FF;background:#C6C6FF"></div></div>
<div style="left:2.57px;top:729.23px;width:1370.44px;height:13.31px;background:#D4D0C8;"></div>
<div style="left:2.57px;top:729.7px;width:1370.44px;height:1.28px;background:#fff;"></div>
<div style="left:3.5px;top:732.27px;width:50.2px;height:10.27px;background:#E2E0DB;"></div>
<div style="left:3.5px;top:732.27px;width:50.2px;height:1px;background:#F6F5F2"></div>
<div style="left:53.71px;top:732.04px;width:1.5px;height:10.51px;background:#404040"></div>
<div style="left:265.03px;top:732.27px;width:159.95px;height:10.27px;background:#E2E0DB;"></div>
<div style="left:265.03px;top:732.27px;width:159.95px;height:1px;background:#F6F5F2"></div>
<div style="left:424.98px;top:732.04px;width:1.5px;height:10.51px;background:#404040"></div>
<div style="left:427.31px;top:732.27px;width:159.95px;height:10.27px;background:#E2E0DB;"></div>
<div style="left:427.31px;top:732.27px;width:159.95px;height:1px;background:#F6F5F2"></div>
<div style="left:587.26px;top:732.04px;width:1.5px;height:10.51px;background:#404040"></div>
<div style="left:589.01px;top:732.27px;width:159.37px;height:10.27px;background:#7c7a76;"></div>
<div style="left:589.01px;top:732.27px;width:159.37px;height:1px;background:#505050"></div>
<div style="left:1196.13px;top:732.27px;width:181.55px;height:10.27px;background:#E2E0DB;"></div>
<div style="left:1196.13px;top:732.27px;width:181.55px;height:1px;background:#F6F5F2"></div>
<div style="left:1377.68px;top:732.04px;width:1.5px;height:10.51px;background:#404040"></div>
</div>
<svg id="ov" viewBox="0 0 1170 629" width="1170" height="629">
<path d="M32.10 592.05 l3.2 -3.2 v6.4z" fill="#000"/>
<path d="M532.70 592.05 l-3.2 -3.2 v6.4z" fill="#000"/>
<path d="M1141.00 175.00 l3.2 3.2 h-6.4z" fill="#000"/>
<path d="M1141.00 337.20 l3.2 -3.2 h-6.4z" fill="#000"/>
<path d="M642.20 348.55 l3.2 -3.2 v6.4z" fill="#000"/>
<path d="M1129.30 348.55 l-3.2 -3.2 v6.4z" fill="#000"/>
<path d="M1142.3 404.6 h6 l-3 3z" fill="#000"/>
<path d="M1145.70 427.60 l3.2 3.2 h-6.4z" fill="#808080"/>
<path d="M1145.70 456.80 l3.2 -3.2 h-6.4z" fill="#808080"/>
<path d="M1145.90 470.60 l3.2 3.2 h-6.4z" fill="#808080"/>
<path d="M1145.90 525.20 l3.2 -3.2 h-6.4z" fill="#808080"/>
<path d="M1040.60 550.20 l3.2 3.2 h-6.4z" fill="#808080"/>
<path d="M1040.60 578.20 l3.2 -3.2 h-6.4z" fill="#808080"/>
<path d="M1141 564.6 h6 l-3 3z" fill="#000"/>
<rect x="1122.5" y="599.5" width="11" height="11" fill="#C9C9C9"/>
<path d="M1124 605.2h8.4M1128.2 601.2v8" stroke="#111" stroke-width="2" fill="none"/>
<path d="M1033 151 L957.5 218.5 L981 238 Z" fill="#1296FF"/>
<circle cx="963.7" cy="233.6" r="17.7" fill="#2a2a2a"/>
<circle cx="963.7" cy="233.6" r="16.6" fill="#fff"/>
<circle cx="963.7" cy="233.6" r="15.5" fill="#1296FF"/>
<text x="962.4" y="241" font-family="Liberation Sans, Arial, sans-serif" font-size="17.5" fill="#fff" text-anchor="middle">3</text>
<g><rect x="5" y="3" width="8.8" height="11.2" fill="#060f3c"/><path d="M4.4 3.9v9.3h5.2" stroke="#fff" stroke-width="1.4" fill="none"/><rect x="11.2" y="4.9" width="1.9" height="8.9" fill="#CFC89A"/><rect x="12.7" y="4.9" width="0.7" height="8.9" fill="#6e6a3c"/><path d="M9.2 3.5h6.4" stroke="#7f8fd4" stroke-width="0.8" stroke-dasharray="0.9 0.7"/><circle cx="7.4" cy="10.5" r="0.55" fill="#fff"/><circle cx="8.5" cy="9.2" r="0.55" fill="#fff"/><circle cx="9.4" cy="7.5" r="0.65" fill="#fff"/><circle cx="11" cy="8.4" r="0.5" fill="#e8e8ff"/><circle cx="14.4" cy="10" r="0.55" fill="#9fb0e8"/><circle cx="16.4" cy="10.8" r="0.45" fill="#8c9cdc"/></g>
<path d="M1133.6 10.3h5v1.7h-5z" fill="#000"/>
<g fill="none" stroke="#000"><path d="M1148.9 5.6h4.6v3.6h-1.4" stroke-width="1"/><path d="M1148.6 5.5h5.2" stroke-width="1.5"/><path d="M1146.8 8.1h4.7v3.5h-4.7z" stroke-width="1"/><path d="M1146.5 8.1h5.3" stroke-width="1.5"/></g>
<path d="M1163 5.3l6 6M1169 5.3l-6 6" stroke="#000" stroke-width="1.5" fill="none"/>
<g><rect x="25.3" y="21.4" width="6.3" height="8.2" fill="#fff" stroke="#111" stroke-width="1.1"/><path d="M25.3 21.3l3.8 1.8v10.2l-3.8 -3.7z" fill="#8E9A2A" stroke="#1a1a10" stroke-width="0.8"/><path d="M34.3 29.2l2.6 2.8h-5.2z" fill="#1a1a6a"/><path d="M34.3 31.6c0 2 -.8 2.6 -2.6 2.6" stroke="#6a6ac8" stroke-width="1.3" fill="none"/></g>
<g><path d="M81.2 24.4h3.6v-3h7.6l1.4 2.4v9.6h-12.6z" fill="#8c8c8c" stroke="#111" stroke-width="1"/><rect x="85.6" y="22" width="6.4" height="7" fill="#a4a4a4"/><path d="M86 24h5.8M86 26.6h5.8" stroke="#fff" stroke-width="1"/><path d="M86 25.3h5.8" stroke="#111" stroke-width="0.9"/><path d="M82.2 25.4h2.4v3.6" stroke="#111" stroke-width="0.9" fill="none"/><path d="M80.6 29.4h11.6l1.6 4.1h-11.4z" fill="#D4D62C" stroke="#111" stroke-width="0.9"/></g>
<g><rect x="132.6" y="22.8" width="9.4" height="9.6" fill="#fff" stroke="#111" stroke-width="1.1"/><path d="M132.2 23h10.2" stroke="#10107a" stroke-width="1.6"/><path d="M134 25.4h7M134 30.4h7" stroke="#111" stroke-width="0.9" stroke-dasharray="1.2 0.9"/><path d="M139.4 25v6" stroke="#111" stroke-width="0.9" stroke-dasharray="1 1.2"/><path d="M130 27.9h5.4" stroke="#1010D8" stroke-width="1.8"/><path d="M134.6 25.2l3.4 2.7l-3.4 2.7z" fill="#1010D8"/></g>
<path d="M161 33.1h5l-2.5 2.6z" fill="#000"/>
<g transform="translate(0.0 0)"><path d="M195.2 21.2h7.6l1 2.4h-9.6z" fill="#5c5c5c"/><rect x="194.4" y="23.6" width="7.2" height="3.6" fill="#fff" stroke="#111" stroke-width="1"/><path d="M196.2 25.4h3.8" stroke="#111" stroke-width="1"/><path d="M192.6 27.4h10.6l1.6 1.4v3.6h-13.6v-3.2z" fill="#111"/><rect x="202.2" y="24.4" width="2.7" height="7" fill="#111"/><rect x="192" y="30" width="11" height="2.1" fill="#d2d2d2"/><rect x="196.6" y="29.6" width="3.4" height="2.5" fill="#C8E020"/><path d="M197.4 29.2h2.6" stroke="#22226a" stroke-width="0.9"/><rect x="193" y="32.6" width="10" height="2" fill="#8688a0" stroke="#111" stroke-width="0.8"/></g>
<g transform="translate(48.8 0)"><path d="M195.2 21.2h7.6l1 2.4h-9.6z" fill="#5c5c5c"/><rect x="194.4" y="23.6" width="7.2" height="3.6" fill="#fff" stroke="#111" stroke-width="1"/><path d="M196.2 25.4h3.8" stroke="#111" stroke-width="1"/><path d="M192.6 27.4h10.6l1.6 1.4v3.6h-13.6v-3.2z" fill="#111"/><rect x="202.2" y="24.4" width="2.7" height="7" fill="#111"/><rect x="192" y="30" width="11" height="2.1" fill="#d2d2d2"/><rect x="196.6" y="29.6" width="3.4" height="2.5" fill="#C8E020"/><path d="M197.4 29.2h2.6" stroke="#22226a" stroke-width="0.9"/><rect x="193" y="32.6" width="10" height="2" fill="#8688a0" stroke="#111" stroke-width="0.8"/></g>
<g><path d="M291.6 23.4h12.6v7.2l-4.2 3.8h-8.4z" fill="#F2F27C" stroke="#111" stroke-width="1.1"/><path d="M299.8 34.2v-3.6h4.2" fill="#fff" stroke="#111" stroke-width="0.9"/><path d="M298 25.6h4.6M298 28h4.6" stroke="#fff" stroke-width="1"/><path d="M293.4 31.6v-8.4a1.8 1.8 0 0 1 3.6 0v8.2a1 1 0 0 1 -2 0v-6" fill="none" stroke="#333" stroke-width="1.1"/></g>
<path d="M517.70 121.50h6.60v-2.6l7.20 3.8l-7.20 3.8v-2.6h-6.60z" fill="#4E78A4"/>
<path d="M1142.00 100.00h-6.60v-2.6l-7.20 3.8l7.20 3.8v-2.6h6.60z" fill="#4E78A4"/>
</svg>
</div>
</div>
</body></html>
